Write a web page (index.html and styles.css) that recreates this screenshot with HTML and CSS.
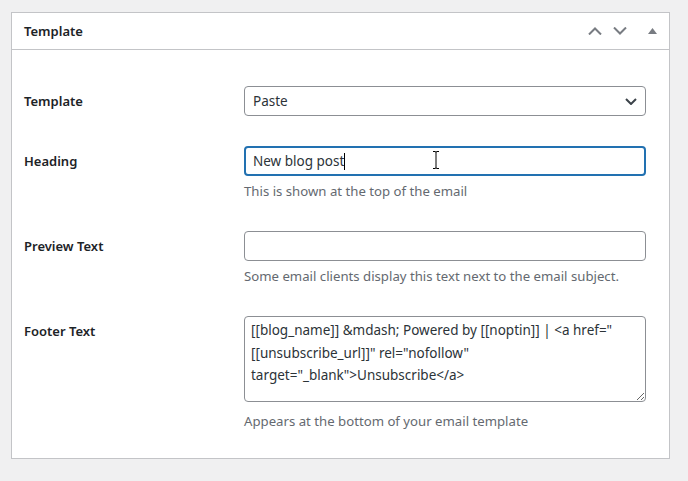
FILE: index.html
```html
<!DOCTYPE html>
<html>
<head>
<meta charset="utf-8">
<link rel="stylesheet" href="styles.css">
</head>
<body>
<div class="postbox">
  <div class="postbox-header">
    <h2 class="hndle">Template</h2>
    <div class="handle-actions">
      <svg class="hicon" width="14" height="8" viewBox="0 0 14 8"><path d="M1 7.5 L7 1.5 L13 7.5" fill="none" stroke="#787c82" stroke-width="2"/></svg>
      <svg class="hicon" width="14" height="8" viewBox="0 0 14 8"><path d="M1 0.5 L7 6.5 L13 0.5" fill="none" stroke="#787c82" stroke-width="2"/></svg>
      <svg class="hicon tri" width="9" height="6" viewBox="0 0 9 6"><path d="M4.5 0 L9 6 L0 6 Z" fill="#787c82"/></svg>
    </div>
  </div>
  <div class="inside">
    <div class="form-row">
      <div class="label">Template</div>
      <div class="field">
        <div class="select">
          <span>Paste</span>
          <svg width="12" height="7" viewBox="0 0 12 7"><path d="M1 1 L6 6 L11 1" fill="none" stroke="#3c434a" stroke-width="2"/></svg>
        </div>
      </div>
    </div>
    <div class="form-row">
      <div class="label">Heading</div>
      <div class="field">
        <div class="input focused"><span>New blog post</span><span class="caret"></span>
          <svg class="ibeam" width="8" height="18" viewBox="0 0 8 18"><path d="M1 0.5 H3 Q4 0.5 4 1.5 V16.5 Q4 17.5 3 17.5 H1 M7 0.5 H5 Q4 0.5 4 1.5 M4 16.5 Q4 17.5 5 17.5 H7" fill="none" stroke="#000" stroke-width="1"/></svg>
        </div>
        <p class="description">This is shown at the top of the email</p>
      </div>
    </div>
    <div class="form-row">
      <div class="label">Preview Text</div>
      <div class="field">
        <div class="input"></div>
        <p class="description">Some email clients display this text next to the email subject.</p>
      </div>
    </div>
    <div class="form-row">
      <div class="label">Footer Text</div>
      <div class="field">
        <textarea class="textarea">[[blog_name]] &amp;mdash; Powered by [[noptin]] | &lt;a href="[[unsubscribe_url]]" rel="nofollow" target="_blank"&gt;Unsubscribe&lt;/a&gt;</textarea>
        <p class="description">Appears at the bottom of your email template</p>
      </div>
    </div>
  </div>
</div>
</body>
</html>
```

FILE: styles.css
```css
html, body {
  margin: 0;
  padding: 0;
  background: #f0f0f1;
}
body {
  padding: 12px 18px 0 11px;
  font-family: "Noto Sans", "Open Sans", sans-serif;
  color: #1d2327;
  font-size: 13px;
}
.postbox {
  background: #fff;
  border: 1px solid #c3c4c7;
  width: 657px;
  box-sizing: content-box;
  height: 445px;
}
.postbox-header {
  height: 36px;
  border-bottom: 1px solid #c3c4c7;
  display: flex;
  align-items: center;
  justify-content: space-between;
  padding: 0 0 0 12px;
}
.hndle {
  margin: 0;
  font-size: 13px;
  font-weight: 600;
  line-height: 36px;
}
.handle-actions {
  display: flex;
  align-items: center;
  padding-right: 12px;
}
.hicon { display: block; margin-left: 11px; }
.hicon:first-child { margin-left: 0; }
.hicon.tri { margin-left: 21px; margin-top: -1px; }
.inside {
  padding: 21px 23px 0 12px;
}
.form-row {
  display: grid;
  grid-template-columns: 220px 1fr;
  padding: 15px 0;
}
.label {
  font-size: 13px;
  font-weight: 600;
  line-height: 30px;
}
.field { min-width: 0; }
.select, .input {
  box-sizing: border-box;
  height: 30px;
  border: 1px solid #8c8f94;
  border-radius: 4px;
  display: flex;
  align-items: center;
  padding: 0 8px;
  font-size: 13.5px;
  color: #2c3338;
  position: relative;
}
.select { justify-content: space-between; }
.select svg { display: block; }
.input.focused {
  border: 2px solid #2271b1;
  padding: 0 7px;
}
.caret {
  display: inline-block;
  width: 1px;
  height: 17px;
  background: #000;
}
.ibeam {
  position: absolute;
  left: 186px;
  top: 3px;
}
.description {
  margin: 5px 0 0;
  font-size: 13.2px;
  line-height: 20px;
  color: #646970;
}
.textarea {
  display: block;
  box-sizing: border-box;
  width: 100%;
  height: 86px;
  margin: 0;
  border: 1px solid #8c8f94;
  border-radius: 4px;
  padding: 2px 6px;
  font-family: "Noto Sans", "Open Sans", sans-serif;
  font-size: 13.5px;
  line-height: 22.5px;
  color: #2c3338;
  resize: vertical;
  overflow: hidden;
}
.textarea + .description { margin-top: 9px; }
```
